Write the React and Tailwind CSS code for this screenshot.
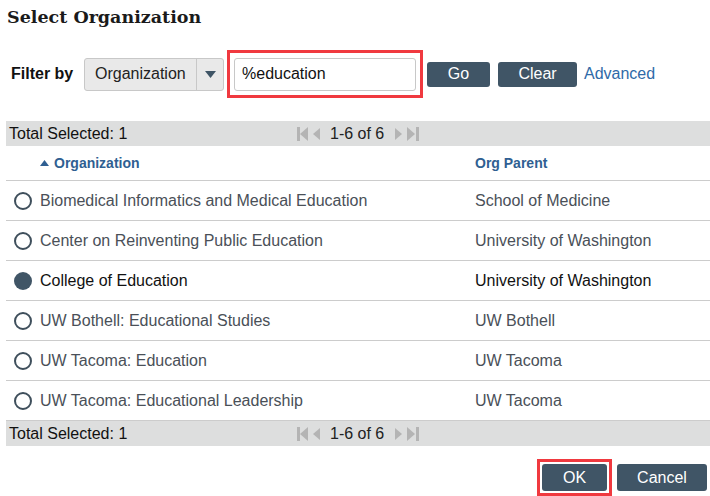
import React, { useState } from 'react'

const rows = [
    { org: 'Biomedical Informatics and Medical Education', parent: 'School of Medicine' },
    { org: 'Center on Reinventing Public Education', parent: 'University of Washington' },
    { org: 'College of Education', parent: 'University of Washington' },
    { org: 'UW Bothell: Educational Studies', parent: 'UW Bothell' },
    { org: 'UW Tacoma: Education', parent: 'UW Tacoma' },
    { org: 'UW Tacoma: Educational Leadership', parent: 'UW Tacoma' },
]

const Pager = () => (
    <div className="flex items-center text-[#222]">
        <svg width="11" height="16" viewBox="0 0 11 16" className="text-[#b4b4b4]">
            <rect x="0" y="1" width="3" height="14" fill="currentColor" />
            <path d="M11 1 L3 8 L11 15 Z" fill="currentColor" />
        </svg>
        <svg width="8" height="16" viewBox="0 0 8 16" className="ml-[5px] text-[#b4b4b4]">
            <path d="M7 2 L0 8 L7 14 Z" fill="currentColor" />
        </svg>
        <span className="ml-[9px] mr-[10px]">1-6 of 6</span>
        <svg width="8" height="16" viewBox="0 0 8 16" className="text-[#b4b4b4]">
            <path d="M1 2 L8 8 L1 14 Z" fill="currentColor" />
        </svg>
        <svg width="12" height="16" viewBox="0 0 12 16" className="ml-[5px] text-[#b4b4b4]">
            <path d="M0 1 L8 8 L0 15 Z" fill="currentColor" />
            <rect x="9" y="1" width="3" height="14" fill="currentColor" />
        </svg>
    </div>
)

const Bar = () => (
    <div className="ml-[6px] flex h-[25px] items-center bg-[#dddede] pl-[3px] text-[16px] text-[#111]">
        <span className="w-[288px]">Total Selected: 1</span>
        <Pager />
    </div>
)

export default function App() {
    const [selected, setSelected] = useState(2)

    return (
        <div className="h-[496px] w-[710px] bg-white font-['Liberation_Sans',Arial,sans-serif]">
            <h1 className="px-[7px] pt-[4px] font-['DejaVu_Serif',serif] text-[17.5px] font-bold leading-[26px] text-[#1a1a1a]">
                Select Organization
            </h1>

            {/* filter row */}
            <div className="mt-[20px] flex h-[48px] items-center">
                <span className="ml-[11px] w-[73px] text-[16px] font-bold text-[#111]">Filter by</span>
                <div className="flex h-[33px] w-[140px] items-center rounded-[3px] border border-[#c8c8c8] bg-[#e9e9e9] text-[16px] text-[#222]">
                    <span className="flex-1 pl-[10px]">Organization</span>
                    <span className="flex h-full w-[27px] items-center justify-center border-l border-[#c8c8c8]">
                        <svg width="11" height="7" viewBox="0 0 11 7">
                            <path d="M0 0 L11 0 L5.5 7 Z" fill="#3f5566" />
                        </svg>
                    </span>
                </div>
                <div className="ml-[3px] flex h-[48px] w-[196px] items-center border-[3px] border-[#f0393f] px-[4px]">
                    <div className="flex h-[33px] w-full items-center rounded-[3px] border border-[#c8c8c8] pl-[7px] text-[16px] text-[#111]">
                        %education
                    </div>
                </div>
                <button className="ml-[4px] h-[25px] w-[63px] rounded-[3px] bg-[#405566] text-[16px] text-white">Go</button>
                <button className="ml-[8px] h-[25px] w-[79px] rounded-[3px] bg-[#405566] text-[16px] text-white">Clear</button>
                <span className="ml-[7px] text-[16px] text-[#2f6aa8]">Advanced</span>
            </div>

            <div className="mt-[23px]">
                <Bar />

                {/* column headers */}
                <div className="ml-[6px] flex h-[35px] items-center border-b border-[#cccccc] text-[14px] font-bold text-[#2f5f92]">
                    <span className="flex w-[469px] items-center pl-[34px]">
                        <svg width="9" height="6" viewBox="0 0 9 6" className="mr-[5px]">
                            <path d="M0 6 L9 6 L4.5 0 Z" fill="#2f5f92" />
                        </svg>
                        Organization
                    </span>
                    <span>Org Parent</span>
                </div>

                {rows.map((r, i) => {
                    const on = i === selected
                    return (
                        <div
                            key={r.org}
                            onClick={() => setSelected(i)}
                            className={`ml-[6px] flex h-[40px] cursor-pointer items-center border-b border-[#cccccc] text-[16px] ${on ? 'text-[#111]' : 'text-[#4a5058]'}`}
                        >
                            <span className="flex w-[34px] justify-center">
                                {on ? (
                                    <span className="h-[18px] w-[18px] rounded-full bg-[#405566]" />
                                ) : (
                                    <span className="h-[18px] w-[18px] rounded-full border-2 border-[#3f4f5c]" />
                                )}
                            </span>
                            <span className="w-[435px]">{r.org}</span>
                            <span>{r.parent}</span>
                        </div>
                    )
                })}

                <Bar />
            </div>

            {/* footer buttons */}
            <div className="mt-[13px] flex justify-end gap-[5px] pr-[3px]">
                <div className="flex h-[37px] w-[75px] items-center justify-center border-[3px] border-[#f0393f]">
                    <button className="h-[27px] w-[65px] rounded-[3px] bg-[#405566] text-[16px] text-white">OK</button>
                </div>
                <div className="flex h-[37px] items-center">
                    <button className="h-[27px] w-[90px] rounded-[3px] bg-[#405566] text-[16px] text-white">Cancel</button>
                </div>
            </div>
        </div>
    )
}
